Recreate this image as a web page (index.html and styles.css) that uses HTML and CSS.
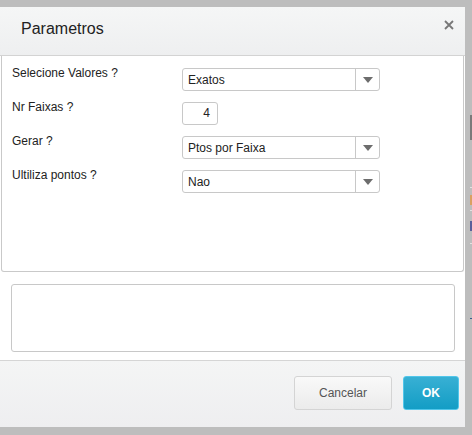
FILE: index.html
```html
<!DOCTYPE html>
<html lang="pt">
<head>
    <meta charset="UTF-8">
    <title>Parametros</title>
    <link rel="stylesheet" href="styles.css">
</head>
<body>
<!-- page behind the overlay, only a sliver shows -->
<div class="backdrop">
    <span class="bd-bar"></span>
    <span class="bd-line bd-l1"></span>
    <span class="bd-mark bd-orange"></span>
    <span class="bd-line bd-l2"></span>
    <span class="bd-mark bd-blue"></span>
    <span class="bd-line bd-l3"></span>
    <span class="bd-rule"></span>
</div>

<div class="dialog">
    <div class="dialog-header">
        <span class="dialog-title">Parametros</span>
        <span class="close">
            <svg width="10" height="10" viewBox="0 0 10 10">
                <path d="M1 1 L9 9 M9 1 L1 9" stroke="#777777" stroke-width="1.8" fill="none"/>
            </svg>
        </span>
    </div>

    <div class="params">
        <div class="param-row">
            <label class="param-label">Selecione Valores ?</label>
            <div class="select">
                <span class="select-value">Exatos</span>
                <span class="select-arrow"></span>
            </div>
        </div>
        <div class="param-row">
            <label class="param-label">Nr Faixas ?</label>
            <div class="number">4</div>
        </div>
        <div class="param-row">
            <label class="param-label">Gerar ?</label>
            <div class="select">
                <span class="select-value">Ptos por Faixa</span>
                <span class="select-arrow"></span>
            </div>
        </div>
        <div class="param-row">
            <label class="param-label">Ultiliza pontos ?</label>
            <div class="select">
                <span class="select-value">Nao</span>
                <span class="select-arrow"></span>
            </div>
        </div>
    </div>

    <div class="notes"></div>

    <div class="dialog-footer">
        <button class="btn btn-cancel">Cancelar</button>
        <button class="btn btn-ok">OK</button>
    </div>
</div>
</body>
</html>
```

FILE: styles.css
```css
body {
    font-family: Arial, "Liberation Sans", sans-serif;
    background-color: #bdbdbd;
    margin: 0;
    padding: 7px 0 0 0;
    width: 472px;
    height: 428px;
    overflow: hidden;
    position: relative;
}

/* sliver of the page behind the modal */
.backdrop {
    position: absolute;
    left: 470px;
    top: 0;
    width: 2px;
    height: 435px;
}

.backdrop span {
    position: absolute;
    left: 0;
    width: 2px;
}

.bd-bar { top: 115px; height: 25px; background-color: #7a7a7a; }
.bd-line { height: 1px; background-color: #e2e2e2; }
.bd-l1 { top: 187px; }
.bd-l2 { top: 210px; }
.bd-l3 { top: 243px; }
.bd-mark { height: 10px; }
.bd-orange { top: 195px; background-color: #d9a062; }
.bd-blue { top: 221px; background-color: #5a5f9a; }
.bd-rule { top: 318px; height: 1px; background-color: #3b5c8c; }

.dialog {
    width: 465px;
    height: 420px;
    background-color: #ffffff;
    display: flex;
    flex-direction: column;
}

.dialog-header {
    height: 48px;
    padding: 0 11px 0 21px;
    display: flex;
    justify-content: space-between;
    align-items: center;
    background: linear-gradient(#f5f6f6, #eeeff0);
    border-bottom: 1px solid #d3d3d3;
}

.dialog-title {
    font-size: 16px;
    color: #222222;
    margin-top: -4px;
}

.close {
    display: flex;
    margin-top: -12px;
}

.params {
    height: 203px;
    margin: 0 1px 0 1px;
    padding-top: 12px;
    border: 1px solid #c9c9c9;
    border-top: none;
    border-radius: 0 0 3px 3px;
    display: flex;
    flex-direction: column;
    gap: 11px;
}

.param-row {
    display: flex;
    align-items: flex-start;
}

.param-label {
    width: 170px;
    padding-left: 10px;
    font-size: 12px;
    line-height: 14px;
    color: #222222;
    margin-top: -2px;
}

.select {
    width: 196px;
    height: 21px;
    border: 1px solid #c8c8c8;
    border-radius: 3px;
    display: flex;
    align-items: center;
    font-size: 12px;
    color: #222222;
}

.select-value {
    flex: 1;
    padding-left: 5px;
}

.select-arrow {
    width: 23px;
    height: 21px;
    border-left: 1px solid #c8c8c8;
    display: flex;
    justify-content: center;
    align-items: center;
}

.select-arrow::after {
    content: "";
    border-left: 5px solid transparent;
    border-right: 5px solid transparent;
    border-top: 6px solid #6d6d6d;
}

.number {
    width: 27px;
    height: 21px;
    padding-right: 7px;
    border: 1px solid #c8c8c8;
    border-radius: 3px;
    font-size: 12px;
    line-height: 21px;
    text-align: right;
    color: #222222;
}

.notes {
    height: 66px;
    margin: 12px 10px 8px 11px;
    border: 1px solid #c8c8c8;
    border-radius: 3px;
}

.dialog-footer {
    flex: 1;
    border-top: 1px solid #d5d5d5;
    background: linear-gradient(#f4f5f5, #eeeef0);
    display: flex;
    justify-content: flex-end;
    align-items: flex-start;
    gap: 11px;
    padding: 15px 6px 0 0;
}

.btn {
    height: 34px;
    font-family: Arial, "Liberation Sans", sans-serif;
    font-size: 12px;
    border-radius: 3px;
    cursor: pointer;
}

.btn-cancel {
    width: 98px;
    color: #555555;
    background: linear-gradient(#f9f9f9, #ebebeb);
    border: 1px solid #d4d4d4;
}

.btn-ok {
    width: 56px;
    color: #ffffff;
    font-weight: bold;
    background: linear-gradient(#38b0d4, #139dc5);
    border: 1px solid #52c6ea;
}
```
